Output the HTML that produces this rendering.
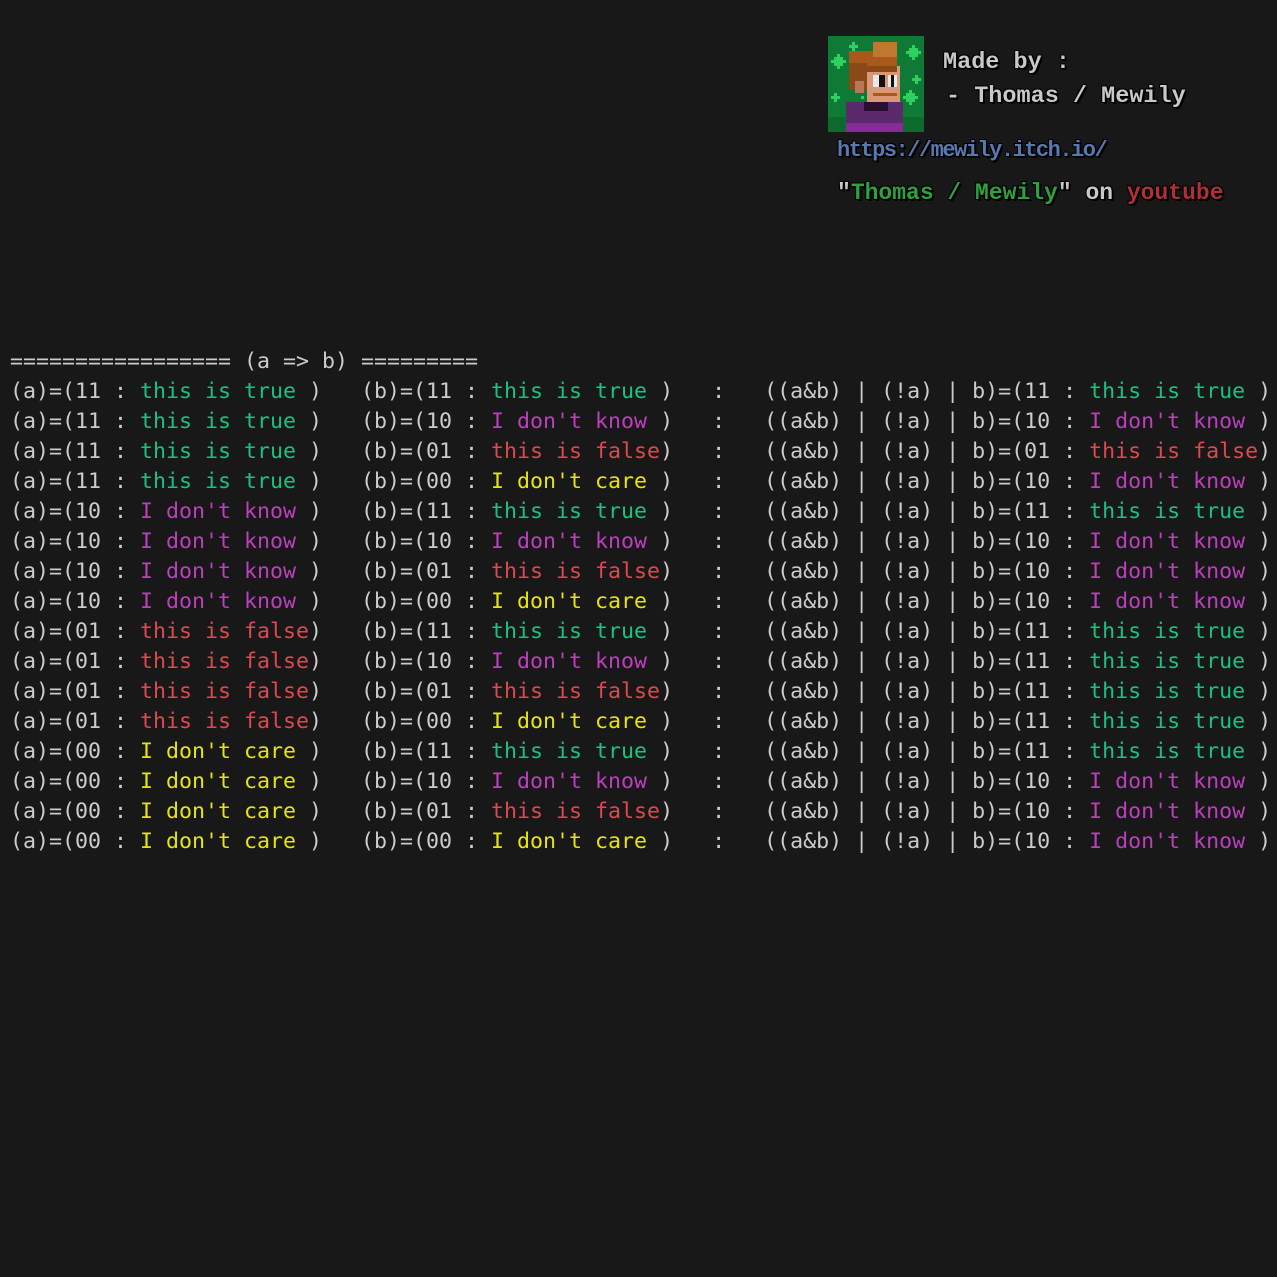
<!DOCTYPE html>
<html><head><meta charset="utf-8"><style>
html,body{margin:0;padding:0;background:#181818;width:1277px;height:1277px;overflow:hidden}
#t{position:absolute;left:10px;top:347px;font-family:"DejaVu Sans Mono","Liberation Mono",monospace;font-size:21.6px;line-height:30px;color:#cccccc;white-space:pre;margin:0}
.g{color:#16c47f}.m{color:#bc3fbc}.r{color:#e0474f}.y{color:#e5e510}
.px{position:absolute;font-family:"Liberation Mono",monospace;font-weight:bold;white-space:pre;text-shadow:2px 2px 0 #000,-1px -1px 0 #000,1px -1px 0 #000,-1px 1px 0 #000}
</style></head><body>
<svg style="position:absolute;left:828px;top:36px" width="96" height="96" viewBox="0 0 32 32" shape-rendering="crispEdges">
<rect width="32" height="32" fill="#0f7a35"/>
<rect x="0" y="27" width="32" height="5" fill="#0c6a2c"/>
<g fill="#2fd060"><rect x="3" y="6" width="1" height="5"/><rect x="1" y="8" width="5" height="1"/><rect x="2" y="7" width="3" height="3"/><rect x="28" y="3" width="1" height="5"/><rect x="26" y="5" width="5" height="1"/><rect x="27" y="4" width="3" height="3"/><rect x="27" y="18" width="1" height="5"/><rect x="25" y="20" width="5" height="1"/><rect x="26" y="19" width="3" height="3"/><rect x="8" y="2" width="1" height="3"/><rect x="7" y="3" width="3" height="1"/><rect x="29" y="13" width="1" height="3"/><rect x="28" y="14" width="3" height="1"/><rect x="11" y="20" width="1" height="1"/><rect x="2" y="19" width="1" height="3"/><rect x="1" y="20" width="3" height="1"/></g>
<rect x="7" y="5" width="16" height="6" fill="#a85a1c"/>
<rect x="15" y="2" width="8" height="5" fill="#c07830"/>
<rect x="7" y="9" width="6" height="9" fill="#8a4a18"/>
<rect x="13" y="10" width="11" height="13" fill="#d89878"/>
<rect x="9" y="15" width="3" height="4" fill="#b87858"/>
<rect x="13" y="10" width="10" height="2" fill="#8a4a18"/>
<rect x="15" y="13" width="4" height="4" fill="#e8e8e8"/><rect x="20" y="13" width="3" height="4" fill="#e8e8e8"/>
<rect x="17" y="13" width="2" height="4" fill="#111"/><rect x="21" y="13" width="1" height="4" fill="#111"/>
<rect x="15" y="19" width="8" height="1" fill="#a85a1c"/>
<rect x="13" y="22" width="7" height="2" fill="#a85a1c"/>
<rect x="6" y="22" width="19" height="10" fill="#5a2a6a"/>
<rect x="12" y="22" width="8" height="3" fill="#2a1030"/>
<rect x="6" y="29" width="19" height="3" fill="#8a2a9a"/>
</svg>
<div class="px" style="left:943px;top:49px;font-size:23.5px;color:#c8c8c8">Made by :</div>
<div class="px" style="left:946px;top:83px;font-size:23.5px;color:#c8c8c8">- Thomas / Mewily</div>
<div class="px" style="left:837px;top:138px;font-size:22px;letter-spacing:-1.5px;color:#5a78b0">https://mewily.itch.io/</div>
<div class="px" style="left:837px;top:180px;font-size:23px;color:#c8c8c8">"<span style="color:#2fa040">Thomas / Mewily</span>" on <span style="color:#b03038">youtube</span></div>
<pre id="t">================= (a =&gt; b) =========
(a)=(11 : <span class="g">this is true </span>)   (b)=(11 : <span class="g">this is true </span>)   :   ((a&amp;b) | (!a) | b)=(11 : <span class="g">this is true </span>)
(a)=(11 : <span class="g">this is true </span>)   (b)=(10 : <span class="m">I don't know </span>)   :   ((a&amp;b) | (!a) | b)=(10 : <span class="m">I don't know </span>)
(a)=(11 : <span class="g">this is true </span>)   (b)=(01 : <span class="r">this is false</span>)   :   ((a&amp;b) | (!a) | b)=(01 : <span class="r">this is false</span>)
(a)=(11 : <span class="g">this is true </span>)   (b)=(00 : <span class="y">I don't care </span>)   :   ((a&amp;b) | (!a) | b)=(10 : <span class="m">I don't know </span>)
(a)=(10 : <span class="m">I don't know </span>)   (b)=(11 : <span class="g">this is true </span>)   :   ((a&amp;b) | (!a) | b)=(11 : <span class="g">this is true </span>)
(a)=(10 : <span class="m">I don't know </span>)   (b)=(10 : <span class="m">I don't know </span>)   :   ((a&amp;b) | (!a) | b)=(10 : <span class="m">I don't know </span>)
(a)=(10 : <span class="m">I don't know </span>)   (b)=(01 : <span class="r">this is false</span>)   :   ((a&amp;b) | (!a) | b)=(10 : <span class="m">I don't know </span>)
(a)=(10 : <span class="m">I don't know </span>)   (b)=(00 : <span class="y">I don't care </span>)   :   ((a&amp;b) | (!a) | b)=(10 : <span class="m">I don't know </span>)
(a)=(01 : <span class="r">this is false</span>)   (b)=(11 : <span class="g">this is true </span>)   :   ((a&amp;b) | (!a) | b)=(11 : <span class="g">this is true </span>)
(a)=(01 : <span class="r">this is false</span>)   (b)=(10 : <span class="m">I don't know </span>)   :   ((a&amp;b) | (!a) | b)=(11 : <span class="g">this is true </span>)
(a)=(01 : <span class="r">this is false</span>)   (b)=(01 : <span class="r">this is false</span>)   :   ((a&amp;b) | (!a) | b)=(11 : <span class="g">this is true </span>)
(a)=(01 : <span class="r">this is false</span>)   (b)=(00 : <span class="y">I don't care </span>)   :   ((a&amp;b) | (!a) | b)=(11 : <span class="g">this is true </span>)
(a)=(00 : <span class="y">I don't care </span>)   (b)=(11 : <span class="g">this is true </span>)   :   ((a&amp;b) | (!a) | b)=(11 : <span class="g">this is true </span>)
(a)=(00 : <span class="y">I don't care </span>)   (b)=(10 : <span class="m">I don't know </span>)   :   ((a&amp;b) | (!a) | b)=(10 : <span class="m">I don't know </span>)
(a)=(00 : <span class="y">I don't care </span>)   (b)=(01 : <span class="r">this is false</span>)   :   ((a&amp;b) | (!a) | b)=(10 : <span class="m">I don't know </span>)
(a)=(00 : <span class="y">I don't care </span>)   (b)=(00 : <span class="y">I don't care </span>)   :   ((a&amp;b) | (!a) | b)=(10 : <span class="m">I don't know </span>)</pre>
</body></html>
